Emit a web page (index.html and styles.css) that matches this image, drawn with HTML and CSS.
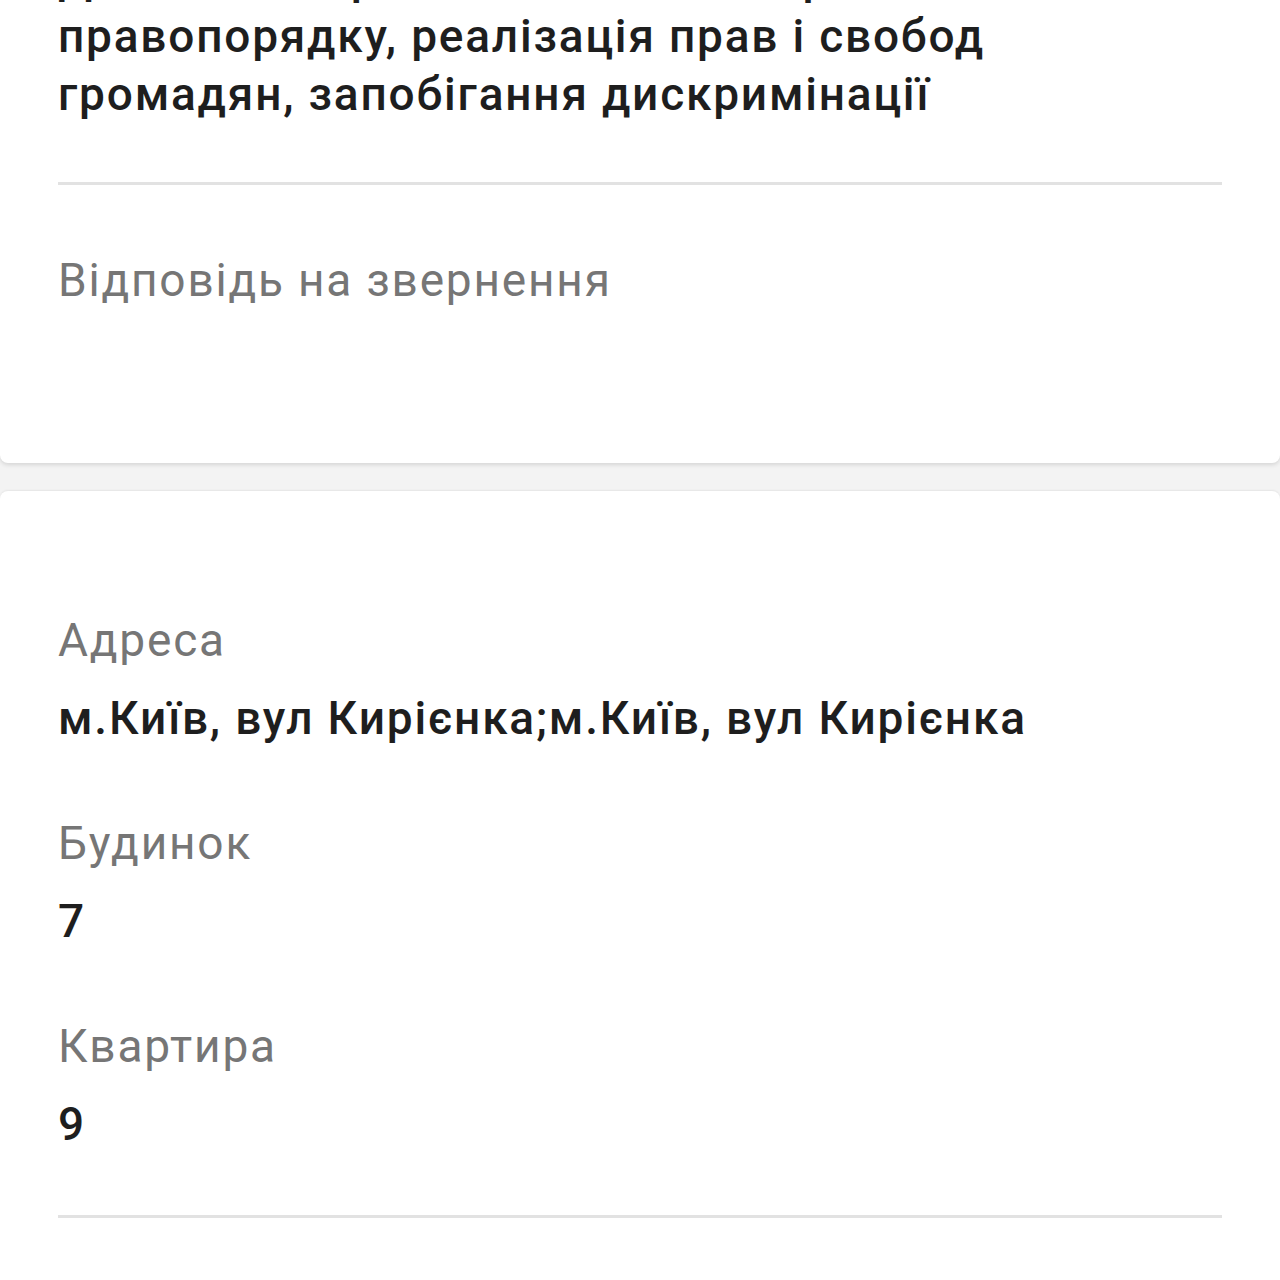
FILE: index.html
```html
<!DOCTYPE html>
<html lang="uk">
<head>
<meta charset="utf-8">
<title>Звернення</title>
<link rel="stylesheet" href="styles.css">
</head>
<body>
<main class="page">
  <section class="card card-top">
    <h1 class="title">Діяльність органів з питань охорони правопорядку, реалізація прав і свобод громадян, запобігання дискримінації</h1>
    <hr class="divider divider-top">
    <div class="field">
      <div class="label">Відповідь на звернення</div>
    </div>
  </section>
  <section class="card card-bottom">
    <div class="fields">
      <div class="field">
        <div class="label">Адреса</div>
        <div class="value">м.Київ, вул Кирієнка;м.Київ, вул Кирієнка</div>
      </div>
      <div class="field">
        <div class="label">Будинок</div>
        <div class="value">7</div>
      </div>
      <div class="field">
        <div class="label">Квартира</div>
        <div class="value">9</div>
      </div>
    </div>
    <hr class="divider divider-bottom">
  </section>
</main>
</body>
</html>
```
FILE: styles.css
```css
html, body {
  margin: 0;
  padding: 0;
}
body {
  background: #f3f3f3;
  font-family: Roboto, "Noto Sans", "Liberation Sans", sans-serif;
  font-size: 46px;
  line-height: 58px;
  letter-spacing: 1.8px;
  color: #212121;
  overflow: hidden;
  height: 1280px;
}
.page {
  display: flex;
  flex-direction: column;
  gap: 28px;
  height: 1280px;
}
.card {
  background: #ffffff;
  padding: 0 58px;
}
.card-top {
  border-radius: 0 0 8px 8px;
  box-shadow: 0 2px 4px rgba(0, 0, 0, 0.12);
  padding-bottom: 154px;
}
.card-bottom {
  flex: 1;
  border-radius: 8px 8px 0 0;
  box-shadow: 0 -1px 2px rgba(0, 0, 0, 0.06);
  padding-top: 120px;
}
.title {
  margin: -51px 0 0;
  font-size: 46px;
  line-height: 58px;
  font-weight: 500;
  color: #1e1e1e;
}
.divider {
  border: 0;
  height: 3px;
  background: #e2e2e2;
  margin: 0;
}
.divider-top {
  margin-top: 59px;
  margin-bottom: 66px;
}
.divider-bottom {
  margin-top: 62px;
}
.fields {
  display: flex;
  flex-direction: column;
  gap: 67px;
}
.field {
  display: flex;
  flex-direction: column;
  gap: 20px;
}
.label {
  color: #767676;
  font-weight: 400;
}
.value {
  color: #1e1e1e;
  font-weight: 500;
}
```
